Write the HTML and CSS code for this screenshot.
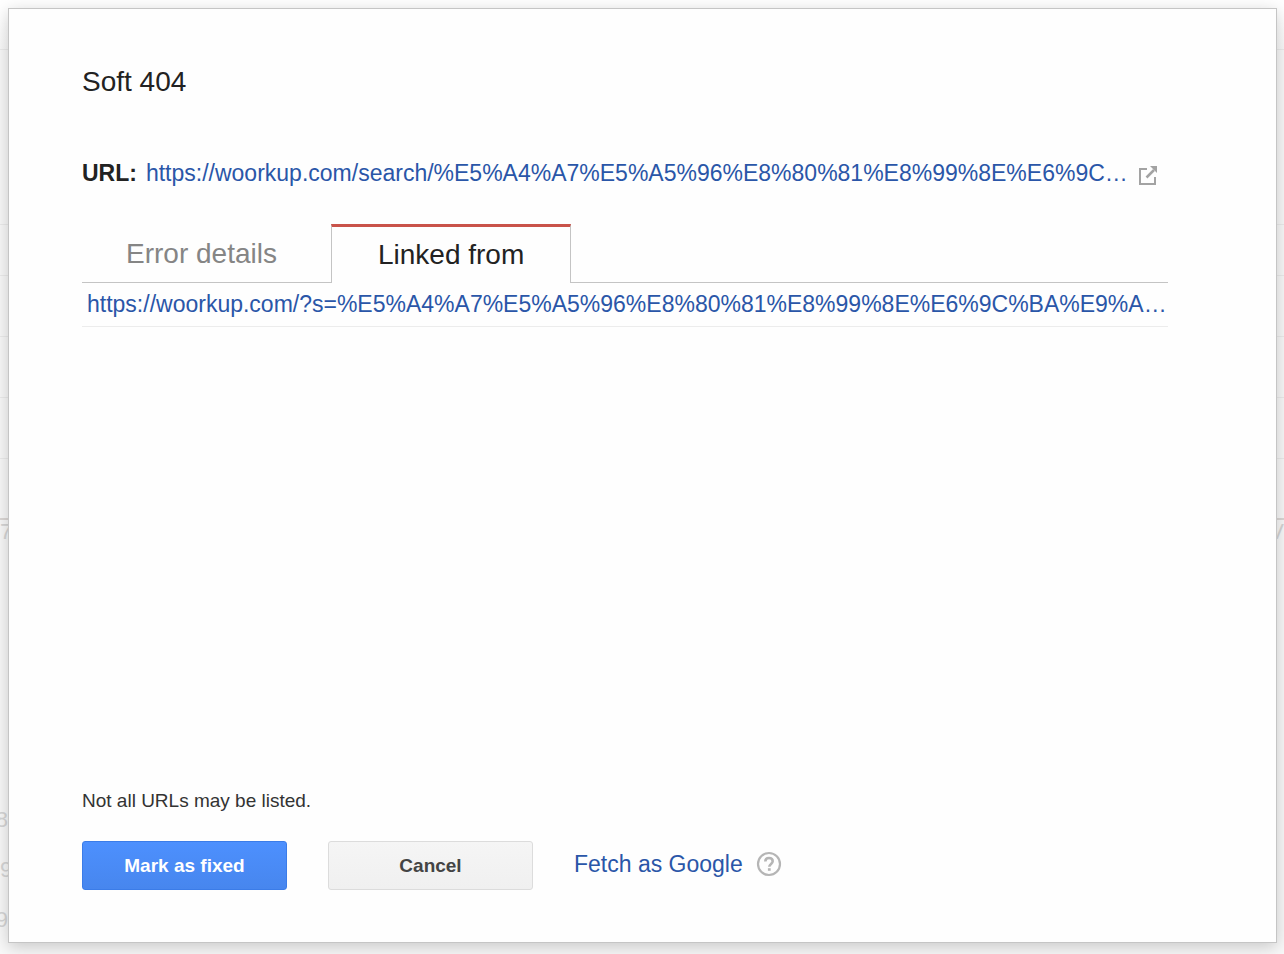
FILE: index.html
```html
<!DOCTYPE html>
<html lang="en">
<head>
  <meta charset="UTF-8">
  <meta name="viewport" content="width=device-width, initial-scale=1">
  <title>Soft 404</title>
  <link rel="stylesheet" href="styles.css">
</head>
<body>
  <!-- dimmed page behind the dialog -->
  <div class="backdrop" aria-hidden="true">
    <div class="grid-line first"></div>
    <div class="grid-line tall"></div>
    <div class="grid-line short"></div>
    <div class="grid-line"></div>
    <div class="grid-line"></div>
    <div class="grid-line"></div>
    <div class="grid-line axis"></div>
    <div class="axis-labels"><span>7</span><span>V</span></div>
    <div class="rows">
      <span class="edge">8</span>
      <span>9</span>
      <span class="edge">9</span>
    </div>
  </div>

  <main class="dialog" role="dialog" aria-labelledby="dialogTitle">
    <h1 class="title" id="dialogTitle">Soft 404</h1>

    <div class="url-row">
      <span class="url-label">URL:</span>
      <a class="url-link" href="#">https://woorkup.com/search/%E5%A4%A7%E5%A5%96%E8%80%81%E8%99%8E%E6%9C…</a>
      <a class="open-link" href="#" aria-label="Open in new window">
        <svg width="20" height="20" viewBox="0 0 20 20" fill="none" stroke="#a3a3a3" stroke-width="2">
          <path d="M9 3H2v15h15v-7"/>
          <path d="M8.500 11.500L16 4" stroke-width="2.500"/>
          <path d="M12 0h7v7z" fill="#a3a3a3" stroke="none"/>
        </svg>
      </a>
    </div>

    <div class="tabs" role="tablist">
      <button class="tab" type="button" role="tab" aria-selected="false">Error details</button>
      <button class="tab active" type="button" role="tab" aria-selected="true">Linked from</button>
    </div>

    <ul class="link-list">
      <li><a href="#">https://woorkup.com/?s=%E5%A4%A7%E5%A5%96%E8%80%81%E8%99%8E%E6%9C%BA%E9%A…</a></li>
    </ul>

    <p class="note">Not all URLs may be listed.</p>

    <div class="actions">
      <button class="btn primary" type="button">Mark as fixed</button>
      <button class="btn" type="button">Cancel</button>
      <div class="fetch">
        <a class="fetch-link" href="#">Fetch as Google</a>
        <a class="help" href="#" aria-label="Help">
          <svg width="26" height="26" viewBox="0 0 26 26" fill="none" stroke="#b5b5b5">
            <circle cx="13" cy="13" r="11" stroke-width="2.200"/>
            <path d="M9.300 10.600c0-2.300 1.500-3.600 3.700-3.600s3.700 1.300 3.700 3.300c0 2.600-3.400 2.700-3.400 5.500" stroke-width="2.600"/>
            <path d="M11.900 17.200h2.800v2.600h-2.800z" fill="#b5b5b5" stroke="none"/>
          </svg>
        </a>
      </div>
    </div>
  </main>
</body>
</html>
```
FILE: styles.css
```css
:root {
  --link-color: #2a56a8;
  --text-color: #222;
  --line-color: #c4c4c4;
  --body-font: "Liberation Sans", Arial, sans-serif;
}

* {
  margin: 0;
  padding: 0;
  box-sizing: border-box;
  font-family: var(--body-font);
}

body {
  display: flex;
  min-height: 100vh;
  padding: 8px 7px 11px 8px;
  background: #fff;
  color: var(--text-color);
}

a {
  color: var(--link-color);
  text-decoration: none;
}

a:hover {
  text-decoration: underline;
}

/* Page behind the dialog */
.backdrop {
  position: absolute;
  inset: 0;
  overflow: hidden;
  background: linear-gradient(#fff 20px, #f9f9f9 50px);
  color: #d6d6d6;
  font-size: 22px;
  line-height: 24px;
}

.grid-line {
  height: 61px;
  border-bottom: 1px solid #ececec;
}

.grid-line.first {
  height: 50px;
}

.grid-line.tall {
  height: 175px;
}

.grid-line.short {
  height: 51px;
}

.grid-line.axis {
  border-bottom: 2px solid #dcd8d6;
}

.edge {
  display: flex;
  justify-content: flex-end;
  width: 8px;
}

.axis-labels {
  display: flex;
  justify-content: space-between;
}

.rows {
  display: grid;
  gap: 26px;
  padding-top: 264px;
}

/* Dialog */
.dialog {
  position: relative;
  display: flex;
  flex: 1;
  flex-direction: column;
  min-width: 0;
  padding: 57px 108px 52px 73px;
  background: #fefefe;
  border: 1px solid #c5c5c5;
  box-shadow: 0 4px 16px rgba(0, 0, 0, 0.2);
}

.title {
  font-size: 28px;
  font-weight: 400;
  line-height: 32px;
}

.url-row {
  display: flex;
  align-items: center;
  margin-top: 59px;
  padding-right: 10px;
  font-size: 23px;
  line-height: 32px;
}

.url-label {
  margin-right: 9px;
  font-weight: 700;
}

.url-link {
  overflow: hidden;
  flex: 1;
  white-space: nowrap;
  text-overflow: ellipsis;
}

.open-link {
  flex: none;
  height: 20px;
  margin: 6px 0 0 8px;
}

.open-link svg,
.help svg {
  display: block;
}

.tabs {
  display: flex;
  margin-top: 35px;
  border-bottom: 1px solid var(--line-color);
}

.tab {
  height: 58px;
  padding: 0 46px;
  border: 1px solid transparent;
  border-top-width: 3px;
  border-bottom: none;
  background: none;
  color: #858585;
  font-size: 28px;
  cursor: pointer;
}

.tab:first-child {
  padding: 0 53px 2px 43px;
}

.tab.active {
  height: 59px;
  margin-bottom: -1px;
  border-color: #c9534a var(--line-color) transparent;
  background: #fefefe;
  color: var(--text-color);
}

.link-list {
  list-style: none;
}

.link-list li {
  overflow: hidden;
  padding: 5px 0 6px 5px;
  border-bottom: 1px solid #ececec;
  font-size: 23px;
  line-height: 32px;
  white-space: nowrap;
  text-overflow: ellipsis;
}

.note {
  margin-top: auto;
  color: #333;
  font-size: 19px;
  line-height: 24px;
}

.actions {
  display: flex;
  align-items: center;
  margin-top: 28px;
}

.btn {
  width: 205px;
  height: 49px;
  margin-right: 41px;
  border: 1px solid #dcdcdc;
  border-radius: 3px;
  background: linear-gradient(#f5f5f5, #f0f0f0);
  color: #444;
  font-size: 19px;
  font-weight: 700;
  cursor: pointer;
}

.btn.primary {
  border-color: #3b7ce8;
  background: linear-gradient(#4d90fe, #4786ee);
  color: #fff;
}

.fetch {
  display: flex;
  align-items: center;
  padding-bottom: 4px;
  font-size: 23px;
  line-height: 32px;
}

.help {
  margin-left: 13px;
}
```
